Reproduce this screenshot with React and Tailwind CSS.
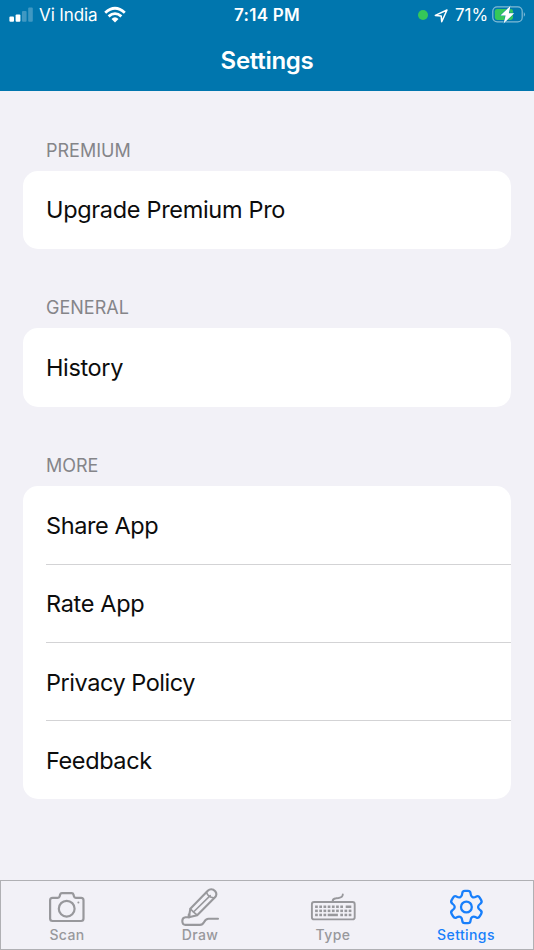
import React from "react";

// Rounded outline of a cog with six teeth, centred on the origin.
function cogOutline() {
  const tooth = [[-4.3, -11], [-4, -16.2], [4, -16.2], [4.3, -11]];
  const pts = [];
  for (let i = 0; i < 6; i++) {
    const a = (i * Math.PI) / 3;
    tooth.forEach(([x, y]) =>
      pts.push([x * Math.cos(a) - y * Math.sin(a), x * Math.sin(a) + y * Math.cos(a)])
    );
  }
  const toward = (p, q, d) => {
    const l = Math.hypot(q[0] - p[0], q[1] - p[1]);
    const t = Math.min(d / l, 0.5);
    return [p[0] + (q[0] - p[0]) * t, p[1] + (q[1] - p[1]) * t];
  };
  return (
    pts
      .map((p, i) => {
        const a = toward(p, pts[(i + 23) % 24], 2.5);
        const b = toward(p, pts[(i + 1) % 24], 2.5);
        return `${i ? "L" : "M"}${a.join(" ")}Q${p.join(" ")} ${b.join(" ")}`;
      })
      .join("") + "Z"
  );
}

function CameraIcon() {
  return (
    <svg width="40" height="40" viewBox="47.7 887 40 40" fill="none" stroke="currentColor" strokeWidth="2.2" strokeLinejoin="round">
      <path d="M52.2 897.8H57.6Q59 897.8 59.3 896.5L59.8 894.6Q60.2 893.2 61.6 893.2H71.4Q72.8 893.2 73.2 894.6L73.7 896.5Q74 897.8 75.4 897.8H80.8Q83.2 897.8 83.2 900.2V918.6Q83.2 921 80.8 921H52.2Q49.8 921 49.8 918.6V900.2Q49.8 897.8 52.2 897.8Z" />
      <circle cx="66.4" cy="908.7" r="7.9" />
      <circle cx="78.1" cy="902.4" r="1" fill="currentColor" stroke="none" />
    </svg>
  );
}

function DrawIcon() {
  return (
    <svg width="42" height="40" viewBox="180 887 42 40" fill="none" stroke="currentColor" strokeWidth="2.1" strokeLinejoin="round" strokeLinecap="round">
      <path d="M190.3 908.8L207.8 890.8Q210.3 888.3 213.5 889.8Q217.4 892.4 216 895.8L215 897.3L197.2 915.2L188.9 917.2Z" />
      <path d="M206.4 892.3Q208.6 898.3 214.6 897.7M190.3 908.8L193.3 911.9L197.2 915.2M194 911.5L210.2 895.6" strokeWidth="1.6" />
      <path d="M189 914.8V917" strokeWidth="2.6" />
      <path d="M189 917.3H185.5Q182.4 917.5 182.3 921Q182.4 924.8 185.5 924.9H200C205 924.9 203.3 918.8 208.5 918.8H218" />
    </svg>
  );
}

function KeyboardIcon() {
  const columns = [315.1, 319.3, 323.5, 327.7, 331.9, 336.1, 340.3];
  const key = (x, y, w = 2.7) => <rect key={`${x}-${y}`} x={x} y={y} width={w} height="2.5" />;
  return (
    <svg width="48" height="40" viewBox="310 887 48 40" fill="currentColor">
      <rect x="311.9" y="902" width="42.8" height="17.4" rx="2.2" fill="none" stroke="currentColor" strokeWidth="1.9" />
      <path d="M332.6 901.5Q332.6 898.6 336 898.3L338.5 898Q342.7 897.3 342.8 894.5" fill="none" stroke="currentColor" strokeWidth="1.9" strokeLinecap="round" />
      {columns.map((x) => key(x, 905.5))}
      {key(345.7, 905.5, 5.6)}
      {columns.map((x) => key(x, 909.6))}
      {key(344.5, 909.6)}
      {key(348.7, 909.6)}
      {columns.slice(0, 3).map((x) => key(x, 913.7))}
      {key(327.7, 913.7, 10.2)}
      {key(340.3, 913.7)}
      {key(344.5, 913.7)}
      {key(348.7, 913.7)}
    </svg>
  );
}

function GearIcon() {
  return (
    <svg width="40" height="40" viewBox="-19.4 -20 40 40" fill="none" stroke="currentColor" strokeWidth="2.3" strokeLinejoin="round">
      <path d={cogOutline()} />
      <circle r="5.4" />
    </svg>
  );
}

function StatusBar() {
  return (
    <div className="grid h-[30px] grid-cols-[1fr_auto_1fr] items-center">
      <div className="flex items-center pl-[9px]">
        <svg width="25" height="18" viewBox="0 0 25 18" fill="white">
          <rect x="0.4" y="10.6" width="4.6" height="5.2" rx="1" />
          <rect x="6.6" y="8.4" width="4.8" height="7.4" rx="1" />
          <rect x="13" y="5.1" width="4.6" height="10.7" rx="1" opacity="0.25" />
          <rect x="19.2" y="1.6" width="4.6" height="14.2" rx="1" opacity="0.25" />
        </svg>
        <span className="ml-[5px] text-[17px] leading-[30px] tracking-[-0.1px]">Vi India</span>
        <svg className="ml-[6px]" width="22" height="18" viewBox="0 0 22 18" fill="none" stroke="white" strokeWidth="2.8">
          <path d="M1.2 6.8Q11 -2.2 20.8 6.8" />
          <path d="M4.6 10.4Q11 4.8 17.4 10.4" />
          <path d="M7.5 13.1Q11 9.6 14.5 13.1L11 16.6Z" fill="white" stroke="none" />
        </svg>
      </div>
      <span className="text-[17px] font-semibold leading-[30px] tracking-[0.3px]">7:14 PM</span>
      <div className="flex items-center justify-end pr-[8px]">
        <span className="size-[10px] rounded-full bg-[#35c759]" />
        <svg className="ml-[6px]" width="15" height="15" viewBox="0 0 15 15" fill="none" stroke="white" strokeWidth="1.5" strokeLinejoin="round">
          <path d="M1.3 7.4L13 2L7.7 13.7L7.2 7.9Z" />
        </svg>
        <span className="ml-[6px] text-[17px] leading-[30px] tracking-[-0.1px]">71%</span>
        <svg className="ml-[4px]" width="34" height="20" viewBox="0 0 34 20">
          <rect x="0.8" y="1.9" width="29.4" height="15" rx="4.4" fill="none" stroke="white" strokeOpacity="0.5" strokeWidth="1.2" />
          <path d="M31.8 7Q34.2 9.4 31.8 11.8Z" fill="white" fillOpacity="0.5" />
          <rect x="2.8" y="3.9" width="18.2" height="11" rx="2.4" fill="#35c759" />
          <path d="M18.6 0.6L8.4 10.4H13.6L11.6 18.4L22.2 8.2H16.8Z" fill="white" stroke="#0076ae" strokeWidth="0.8" paintOrder="stroke" strokeLinejoin="round" />
        </svg>
      </div>
    </div>
  );
}

function Section({ title, rows }) {
  return (
    <section className="flex flex-col">
      <h2 className="ml-[23px] h-[41px] pt-[7px] text-[18px] leading-[28px] text-[#858589]">{title}</h2>
      <ul className="overflow-hidden rounded-[15px] bg-white pl-[23px]">
        {rows.map(([label, tracking], i) => (
          <li key={label} className={`flex h-[78.2px] items-center text-[23.5px] text-[#0c0c0c] ${tracking} ${rows.length > 1 ? "pt-[1.5px]" : ""} ${i < rows.length - 1 ? "border-b border-[#d3d3d5]" : ""}`}>
            {label}
          </li>
        ))}
      </ul>
    </section>
  );
}

function Tab({ icon, label, active }) {
  return (
    <div className={`flex flex-1 flex-col items-center pt-[6px] ${active ? "text-[#187ffb]" : "text-[#98989c]"}`}>
      {icon}
      <span className="-ml-px text-[14px] font-medium leading-[16px] tracking-[0.4px]">{label}</span>
    </div>
  );
}

export default function App() {
  return (
    <div className="flex h-[950px] w-[534px] flex-col overflow-hidden bg-[#f2f1f7] font-['Inter',sans-serif]">
      <header className="h-[91px] bg-[#0076ae] text-white">
        <StatusBar />
        <h1 className="text-center text-[24px] font-semibold leading-[61px] tracking-[-0.3px]">Settings</h1>
      </header>
      <main className="flex flex-1 flex-col gap-[38.8px] px-[23px] pt-[38.5px]">
        <Section title="PREMIUM" rows={[["Upgrade Premium Pro", "tracking-[-0.32px]"]]} />
        <Section title="GENERAL" rows={[["History", "tracking-[-0.35px]"]]} />
        <Section
          title="MORE"
          rows={[
            ["Share App", "tracking-[-0.42px]"],
            ["Rate App", "tracking-[-0.32px]"],
            ["Privacy Policy", "tracking-[-0.46px]"],
            ["Feedback", "tracking-[-0.4px]"],
          ]}
        />
      </main>
      <nav className="flex h-[70px] border border-[#b0b0b4]">
        <Tab icon={<CameraIcon />} label="Scan" />
        <Tab icon={<DrawIcon />} label="Draw" />
        <Tab icon={<KeyboardIcon />} label="Type" />
        <Tab icon={<GearIcon />} label="Settings" active />
      </nav>
    </div>
  );
}
